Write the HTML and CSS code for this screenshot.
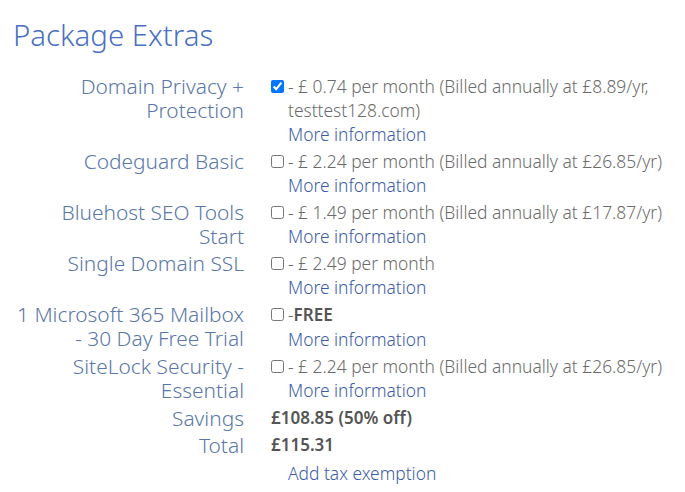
FILE: index.html
```html
<!DOCTYPE html>
<html>
<head>
<meta charset="utf-8">
<link rel="stylesheet" href="styles.css">
</head>
<body>
<h1 class="title">Package Extras</h1>
<div class="extras">
  <div class="label">Domain Privacy + Protection</div>
  <div class="value">
    <input type="checkbox" class="cb" checked>
    <div class="desc">- £ 0.74 per month (Billed annually at £8.89/yr, testtest128.com)<br><a class="more" href="#">More information</a></div>
  </div>

  <div class="label">Codeguard Basic</div>
  <div class="value">
    <input type="checkbox" class="cb">
    <div class="desc">- £ 2.24 per month (Billed annually at £26.85/yr)<br><a class="more" href="#">More information</a></div>
  </div>

  <div class="label">Bluehost SEO Tools Start</div>
  <div class="value">
    <input type="checkbox" class="cb">
    <div class="desc">- £ 1.49 per month (Billed annually at £17.87/yr)<br><a class="more" href="#">More information</a></div>
  </div>

  <div class="label">Single Domain SSL</div>
  <div class="value">
    <input type="checkbox" class="cb">
    <div class="desc">- £ 2.49 per month<br><a class="more" href="#">More information</a></div>
  </div>

  <div class="label">1 Microsoft 365 Mailbox - 30 Day Free Trial</div>
  <div class="value">
    <input type="checkbox" class="cb">
    <div class="desc">-<b class="strong">FREE</b><br><a class="more" href="#">More information</a></div>
  </div>

  <div class="label">SiteLock Security - Essential</div>
  <div class="value">
    <input type="checkbox" class="cb">
    <div class="desc">- £ 2.24 per month (Billed annually at £26.85/yr)<br><a class="more" href="#">More information</a></div>
  </div>

  <div class="label">Savings</div>
  <div class="value"><b class="strong">£108.85 (50% off)</b></div>

  <div class="label">Total</div>
  <div class="value total">
    <b class="strong">£115.31</b>
    <a class="more tax" href="#">Add tax exemption</a>
  </div>
</div>
</body>
</html>
```

FILE: styles.css
```css
body {
  margin: 8px;
  font-family: "Noto Sans", "Open Sans", sans-serif;
  background: #fff;
}
.title {
  margin: 9px 0 21px 5px;
  font-size: 29.4px;
  font-weight: 300;
  color: #4a70c2;
  line-height: 36px;
}
.extras {
  display: grid;
  grid-template-columns: 236px 1fr;
  column-gap: 27px;
  row-gap: 3.1px;
}
.label {
  text-align: right;
  font-size: 20.9px;
  font-weight: 300;
  line-height: 24px;
  color: #5a77a8;
  padding-left: 7px;
}
.value {
  display: flex;
  align-items: flex-start;
  font-size: 17.4px;
  font-weight: 300;
  line-height: 24px;
  color: #6b6b6b;
}
.cb {
  margin: 6px 4px 0 0;
  width: 13px;
  height: 13px;
  flex: none;
}
.desc {
  flex: 1;
}
.more {
  color: #3d5ca8;
  text-decoration: none;
}
.strong {
  font-weight: 600;
  font-size: 17px;
  color: #555;
}
.total {
  flex-direction: column;
}
.tax {
  margin: 4px 0 0 17px;
}
```
